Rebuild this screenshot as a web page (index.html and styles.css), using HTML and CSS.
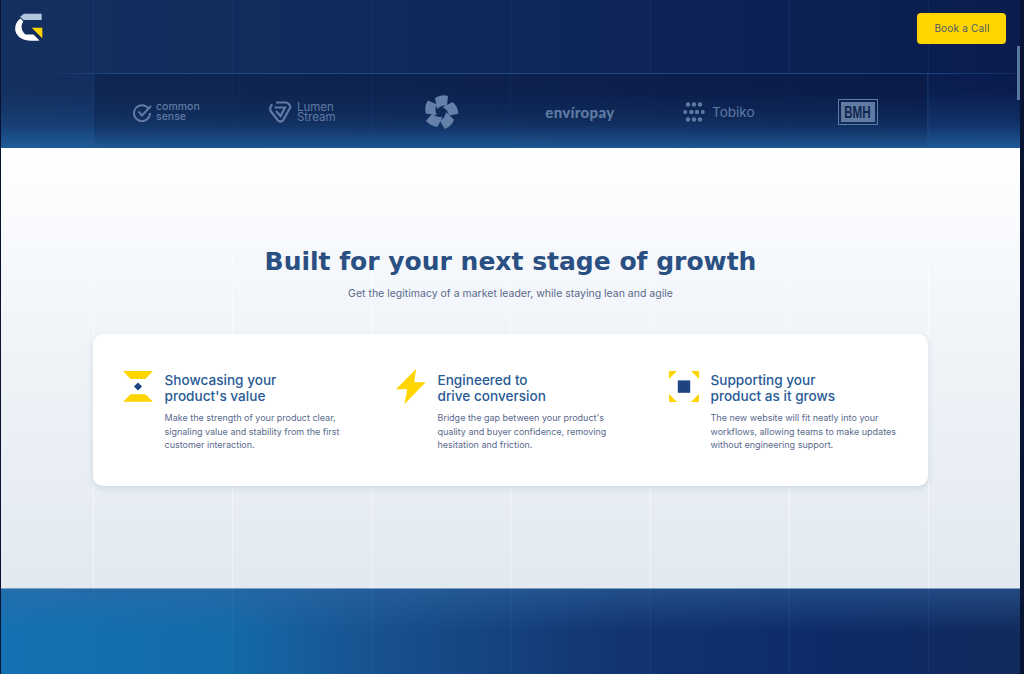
FILE: index.html
```html
<!DOCTYPE html>
<html lang="en">
<head>
    <meta charset="UTF-8">
    <meta name="viewport" content="width=device-width, initial-scale=1.0">
    <title>Built for your next stage of growth</title>
    <link rel="stylesheet" href="styles.css">
</head>
<body>
    <div class="page">
        <section class="hero">
            <header class="topbar">
                <svg class="brand" width="28" height="28" viewBox="0 0 28 28">
                    <path d="M5 3.7 9 .7H26.7V7H8.5Z" fill="#b4c6dd"/>
                    <path d="M5.5 5.5 8.3 8.5C5.5 12 6 18 10.5 21.5L18.5 21.5 24.5 27.6C18 28 12 27.8 8 26.2-2 22-2 11 5.5 5.5Z" fill="#fff"/>
                    <path d="M16.7 14.7H27.3V25.3Z" fill="#ffd500"/>
                </svg>
                <a class="cta" href="#">Book a Call</a>
            </header>
            <div class="logos">
                <div class="logo logo-shift">
                    <svg width="19" height="19" viewBox="0 0 19 19" fill="none" stroke="#5f7ba3" stroke-width="2">
                        <path d="M15.5 5.5A8 8 0 1 0 17 10"/>
                        <path d="M5.5 8.5 9 12.5 18 3"/>
                    </svg>
                    <span class="logo-common">common<br>sense</span>
                </div>
                <div class="logo">
                    <svg width="23" height="22" viewBox="0 0 23 22" fill="none" stroke="#5f7ba3" stroke-width="2.2">
                        <path d="M7 1.5H16Q20 1.5 21.5 6L14 19.5Q11 21.5 9 19.5L1.5 10Q0.5 5 3.5 3.5"/>
                        <path d="M5.5 6.5H16L11.5 15 7 10"/>
                    </svg>
                    <span class="logo-lumen">Lumen<br>Stream</span>
                </div>
                <div class="logo">
                    <svg width="36" height="36" viewBox="-18 -18 36 36" fill="#6381a8">
                        <path d="M-6-14Q0-18 7-16L6-6Q1-8-4-3Z"/>
                        <path d="M-6-14Q0-18 7-16L6-6Q1-8-4-3Z" transform="rotate(72)"/>
                        <path d="M-6-14Q0-18 7-16L6-6Q1-8-4-3Z" transform="rotate(144)"/>
                        <path d="M-6-14Q0-18 7-16L6-6Q1-8-4-3Z" transform="rotate(216)"/>
                        <path d="M-6-14Q0-18 7-16L6-6Q1-8-4-3Z" transform="rotate(288)"/>
                    </svg>
                </div>
                <div class="logo">
                    <span class="logo-enviro">envíropay</span>
                </div>
                <div class="logo">
                    <svg width="22" height="20" viewBox="0 0 22 20" fill="#5f7ba3">
                        <circle cx="5" cy="2.5" r="2.2"/><circle cx="11" cy="2.5" r="2.2"/><circle cx="17" cy="2.5" r="2.2"/>
                        <circle cx="2.2" cy="10" r="2"/><circle cx="8.4" cy="10" r="2.2"/><circle cx="14" cy="10" r="2.2"/><circle cx="19.8" cy="10" r="2"/>
                        <circle cx="5" cy="17.5" r="2.2"/><circle cx="11" cy="17.5" r="2.2"/><circle cx="17" cy="17.5" r="2.2"/>
                    </svg>
                    <span class="logo-tobiko">Tobiko</span>
                </div>
                <div class="logo">
                    <span class="logo-bmh"><b>BMH</b></span>
                </div>
            </div>
            <span class="scroll-thumb"></span>
        </section>

        <section class="growth">
            <h1>Built for your next stage of growth</h1>
            <p class="lead">Get the legitimacy of a market leader, while staying lean and agile</p>
            <div class="card">
                <article class="feature">
                    <svg class="feature-icon" width="30" height="36" viewBox="0 0 30 36">
                        <path d="M0 2H30L22.5 10H7.5Z" fill="#ffd500"/>
                        <path d="M7.5 25.3H22.5L30 32.7H0Z" fill="#ffd500"/>
                        <path d="M15 13.5 19 17.5 15 21.5 11 17.5Z" fill="#1d4480"/>
                    </svg>
                    <div>
                        <h2>Showcasing your<br>product's value</h2>
                        <p>Make the strength of your product clear, signaling value and stability from the first customer interaction.</p>
                    </div>
                </article>
                <article class="feature">
                    <svg class="feature-icon" width="30" height="36" viewBox="0 0 30 36">
                        <path d="M20 0 0 20.3H11.3L8.3 35.3 29.7 13.3H18.3Z" fill="#ffd500"/>
                    </svg>
                    <div>
                        <h2>Engineered to<br>drive conversion</h2>
                        <p>Bridge the gap between your product's quality and buyer confidence, removing hesitation and friction.</p>
                    </div>
                </article>
                <article class="feature">
                    <svg class="feature-icon" width="30" height="36" viewBox="0 0 30 36">
                        <path d="M0 2H8L0 10ZM22 2H30V10ZM0 25 8 33H0ZM30 25V33H22Z" fill="#ffd500"/>
                        <rect x="8.8" y="11.4" width="12.4" height="12.4" fill="#1d4480"/>
                    </svg>
                    <div>
                        <h2>Supporting your<br>product as it grows</h2>
                        <p>The new website will fit neatly into your workflows, allowing teams to make updates without engineering support.</p>
                    </div>
                </article>
            </div>
        </section>

        <section class="band"></section>
    </div>
</body>
</html>
```

FILE: styles.css
```css
* {
    box-sizing: border-box;
}

html, body {
    height: 100%;
}

body {
    margin: 0;
    background-color: #091433;
    font-family: "Inter", "Liberation Sans", sans-serif;
    overflow: hidden;
}

.page {
    display: flex;
    flex-direction: column;
    height: 674px;
    margin: 0 4px 0 1px;
}

/* top dark area */
.hero {
    position: relative;
    height: 148px;
    background-image:
        linear-gradient(90deg, rgba(40, 100, 170, 0.14) 0 1px, transparent 1px),
        linear-gradient(0deg, rgba(34, 100, 165, 0.85) 0, rgba(26, 84, 145, 0.4) 16%, rgba(20, 60, 120, 0) 38%),
        linear-gradient(90deg, #14305f 0, #0f2759 50%, #0a1c4e 100%);
    background-size: 139.17px 100%, auto, auto;
    background-position: 92px 0, 0 0, 0 0;
}

.topbar {
    display: flex;
    justify-content: space-between;
    align-items: flex-start;
    height: 74px;
    padding: 13px 14px 0 14px;
    border-bottom: 1px solid;
    border-image: linear-gradient(90deg, transparent 4%, rgba(36, 96, 165, 0.6) 12%, rgba(36, 96, 165, 0.6) 90%, rgba(36, 96, 165, 0.2) 100%) 1;
}

.cta {
    display: flex;
    justify-content: center;
    align-items: center;
    width: 89px;
    height: 31px;
    padding: 0 0 1px 1px;
    background-color: #ffd500;
    border-radius: 4px;
    color: #4d5c68;
    font-size: 10px;
    letter-spacing: 0.2px;
    text-decoration: none;
}

.scroll-thumb {
    position: absolute;
    top: 46px;
    right: 0;
    width: 3px;
    height: 54px;
    background-color: #56779f;
}

.logos {
    display: grid;
    grid-template-columns: repeat(6, 1fr);
    height: 74px;
    margin: 0 92px;
    border-left: 1px solid rgba(36, 96, 165, 0.3);
    border-right: 1px solid rgba(36, 96, 165, 0.3);
    background-image: linear-gradient(0deg, rgba(9, 22, 58, 0.05) 0, rgba(9, 22, 58, 0.35) 50%);
}

.logo {
    display: flex;
    justify-content: center;
    align-items: center;
    gap: 5px;
    padding-top: 2px;
    color: #5f7ba3;
}

.logo-shift {
    padding-left: 6px;
    gap: 4px;
}

.logo-common {
    font-size: 10.5px;
    font-weight: 500;
    line-height: 10px;
}

.logo-lumen {
    font-size: 11.5px;
    line-height: 10.5px;
}

.logo-enviro {
    font-family: "Lato", sans-serif;
    font-size: 15px;
    font-weight: 900;
    letter-spacing: 0.3px;
}

.logo-tobiko {
    margin-left: 2px;
    font-size: 13.5px;
}

.logo-bmh {
    display: flex;
    justify-content: center;
    align-items: center;
    width: 40px;
    height: 26px;
    padding: 2px;
    border: 1px solid #5f7ba3;
    background-color: #5f7ba3;
    background-clip: content-box;
    color: #12264f;
    font-family: "Liberation Sans", sans-serif;
    font-size: 17px;
    line-height: 1;
}

.logo-bmh b {
    transform: scaleX(0.68);
}

/* light middle section */
.growth {
    height: 440px;
    padding-top: 98px;
    background-image:
        linear-gradient(90deg, rgba(255, 255, 255, 0.5) 0 1px, transparent 1px),
        linear-gradient(180deg, #fff 0, #f4f7fb 30%, #e2e9f0 100%);
    background-size: 139.17px 100%, auto;
    background-position: 92px 0, 0 0;
    text-align: center;
}

h1 {
    margin: 0;
    color: #2a4f82;
    font-family: "DejaVu Sans", sans-serif;
    font-size: 25px;
    font-weight: 700;
    line-height: 32px;
}

.lead {
    margin: 8px 0 0;
    color: #5a6a8c;
    font-size: 10.5px;
    line-height: 16px;
}

.card {
    display: grid;
    grid-template-columns: repeat(3, 1fr);
    gap: 30px;
    height: 152px;
    margin: 32px 92px 0;
    padding: 35px 16px 0 30px;
    background-color: #fff;
    border-radius: 10px;
    box-shadow: 0 2px 6px rgba(40, 70, 110, 0.14);
    text-align: left;
}

.feature {
    display: flex;
    gap: 11.5px;
}

.feature-icon {
    flex-shrink: 0;
}

h2 {
    margin: 3px 0 7px;
    color: #285a96;
    font-size: 13.6px;
    font-weight: 500;
    line-height: 16px;
}

.feature p {
    max-width: 190px;
    margin: 0;
    color: #5a6a8c;
    font-size: 9px;
    line-height: 13.7px;
}

/* blue band at the bottom */
.band {
    flex: 1;
    border-top: 1px solid #7f9fc2;
    background-image:
        linear-gradient(90deg, rgba(70, 140, 200, 0.12) 0 1px, transparent 1px),
        linear-gradient(180deg, rgba(50, 105, 165, 0.5) 0, rgba(40, 90, 150, 0) 50%),
        linear-gradient(90deg, #1472b2 0, #146aa8 22%, #184f8d 38%, #11336f 62%, #0d2b68 80%, #122a5c 100%);
    background-size: 139.17px 100%, auto, auto;
    background-position: 92px 0, 0 0, 0 0;
}
```
